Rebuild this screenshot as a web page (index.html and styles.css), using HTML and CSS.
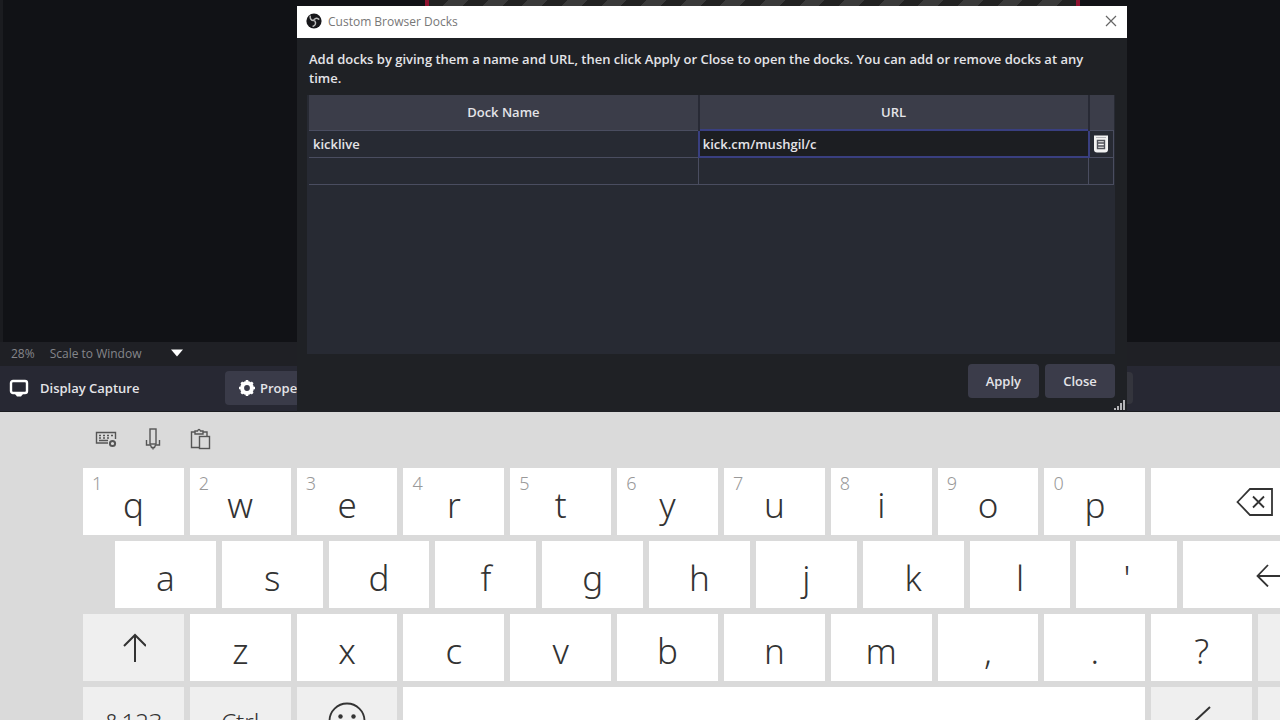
FILE: index.html
```
<!DOCTYPE html>
<html lang="en">
  <head>
    <meta charset="UTF-8" />
    <meta name="viewport" content="width=device-width, initial-scale=1.0" />
    <title>Custom Browser Docks</title>
    <link rel="stylesheet" href="styles.css">
  </head>
  <body>
    <main class="studio">
      <div class="preview">
        <div class="capture-edge"></div>
      </div>

      <div class="scale-bar">
        <span>28%</span>
        <button class="scale-btn">
          Scale to Window
          <svg width="12" height="8" viewBox="0 0 12 8"><path d="M0 0.500h12L6 7.500z" fill="#fff" /></svg>
        </button>
      </div>

      <div class="source-bar">
        <svg class="monitor" width="20" height="18" viewBox="0 0 20 18">
          <rect x="2" y="2" width="16" height="12" rx="2" fill="none" stroke="#fff" stroke-width="2.400" />
          <path d="M6 15h8l-2 2.500H8z" fill="#fff" />
        </svg>
        <span class="source-name">Display Capture</span>
        <button class="props-btn">
          <svg width="16" height="16" viewBox="0 0 16 16">
            <circle cx="8" cy="8" r="4.900" fill="none" stroke="#fff" stroke-width="4" />
            <path d="M8 0v3M8 13v3M0 8h3M13 8h3M2.300 2.300l2 2M11.700 11.700l2 2M2.300 13.700l2-2M11.700 4.300l2-2" stroke="#fff" stroke-width="2.600" />
          </svg>
          Properties
        </button>
        <div class="bar-end"></div>
      </div>

      <!-- Dialog -->
      <section class="dialog" role="dialog" aria-labelledby="dialogTitle">
        <header class="title-bar">
          <svg width="16" height="16" viewBox="0 0 16 16">
            <circle cx="8" cy="8" r="7.600" fill="#17171a" />
            <path d="M4.200 3.200c-.4 2.400 1 4.200 3.300 4.400M12.700 6.200c-2-1.500-4.300-1-5.200 1.400M7.200 13.200c2.300-.8 3-3 1.700-5.100" fill="none" stroke="#bbb" stroke-width="1.500" stroke-linecap="round" />
          </svg>
          <h1 id="dialogTitle">Custom Browser Docks</h1>
          <button class="close-x" aria-label="Close window">
            <svg width="12" height="12" viewBox="0 0 12 12"><path d="M1 1l10 10M11 1L1 11" stroke="#666" stroke-width="1.200" /></svg>
          </button>
        </header>

        <div class="dialog-body">
          <p class="hint">Add docks by giving them a name and URL, then click Apply or Close to open the docks. You can add or remove docks at any time.</p>

          <div class="dock-list">
            <table class="docks">
              <thead>
                <tr>
                  <th>Dock Name</th>
                  <th>URL</th>
                  <th class="action" aria-label="Delete"></th>
                </tr>
              </thead>
              <tbody>
                <tr>
                  <td><input type="text" aria-label="Dock name" value="kicklive" /></td>
                  <td class="editing"><input type="text" aria-label="URL" value="kick.cm/mushgil/c" /></td>
                  <td class="action">
                    <button class="trash" aria-label="Delete dock">
                      <svg width="16" height="20" viewBox="0 0 16 20">
                        <path d="M1 1.500h14v14q0 3-3 3H4q-3 0-3-3z" fill="#f2f2f2" />
                        <path d="M4.500 6.500h7v8h-7zM5 9h6M5 12h6" fill="none" stroke="#50525a" stroke-width="1.400" />
                        <path d="M3 3.500h10" stroke="#b5b5ba" />
                      </svg>
                    </button>
                  </td>
                </tr>
                <tr>
                  <td><input type="text" aria-label="New dock name" /></td>
                  <td><input type="text" aria-label="New dock URL" /></td>
                  <td class="action"></td>
                </tr>
              </tbody>
            </table>
          </div>

          <div class="actions">
            <button class="btn">Apply</button>
            <button class="btn">Close</button>
          </div>
        </div>
        <svg class="grip" width="12" height="12" viewBox="0 0 12 12"><path d="M2 9v2M5 7v4M8 4v7M11 1v10" stroke="#b4b4b8" stroke-width="2" /></svg>
      </section>
    </main>

    <!-- Touch keyboard -->
    <section class="keyboard" aria-label="Touch keyboard">
      <div class="tools">
        <button aria-label="Keyboard settings">
          <svg width="24" height="24" viewBox="0 0 24 24" fill="none" stroke="#555" stroke-width="1.400">
            <path d="M14 16H2.500V5.500h19V12" />
            <path d="M5 8.500h2M9 8.500h2M13 8.500h2M17 8.500h2M5 11h2M9 11h2M13 11h2M5 13.500h9" />
            <circle cx="18.500" cy="16.500" r="2.600" stroke-width="2" />
          </svg>
        </button>
        <button aria-label="Dictate">
          <svg width="24" height="24" viewBox="0 0 24 24" fill="none" stroke="#555" stroke-width="1.400">
            <rect x="9" y="2" width="6" height="15" />
            <path d="M5.500 13v5h4l1 2.500h3l1-2.500h4v-5M12 20v2.500" />
          </svg>
        </button>
        <button aria-label="Clipboard">
          <svg width="24" height="24" viewBox="0 0 24 24" fill="none" stroke="#555" stroke-width="1.400">
            <path d="M11 20.500H3.500V5H7M15 5h4v4" />
            <path d="M7 7V4h2.500q1.500-3 3 0H15v3z" />
            <rect x="11.500" y="9.500" width="10" height="12" />
          </svg>
        </button>
      </div>

      <div class="keys">
        <div class="key-row">
          <button class="key"><small>1</small>q</button>
          <button class="key"><small>2</small>w</button>
          <button class="key"><small>3</small>e</button>
          <button class="key"><small>4</small>r</button>
          <button class="key"><small>5</small>t</button>
          <button class="key"><small>6</small>y</button>
          <button class="key"><small>7</small>u</button>
          <button class="key"><small>8</small>i</button>
          <button class="key"><small>9</small>o</button>
          <button class="key"><small>0</small>p</button>
          <button class="key fill icon" aria-label="Backspace">
            <svg width="38" height="30" viewBox="0 0 38 30" fill="none" stroke="#333" stroke-width="1.800"><path d="M1.500 15L14 2h22v26H14zM17 9.500l11 11M28 9.500l-11 11" /></svg>
          </button>
        </div>
        <div class="key-row indent">
          <button class="key">a</button>
          <button class="key">s</button>
          <button class="key">d</button>
          <button class="key">f</button>
          <button class="key">g</button>
          <button class="key">h</button>
          <button class="key">j</button>
          <button class="key">k</button>
          <button class="key">l</button>
          <button class="key">'</button>
          <button class="key fill icon" aria-label="Enter">
            <svg width="30" height="24" viewBox="0 0 30 24" fill="none" stroke="#333" stroke-width="1.800"><path d="M29 4v9H2M12 2L1.500 13 12 23.500" /></svg>
          </button>
        </div>
        <div class="key-row">
          <button class="key dim icon" aria-label="Shift">
            <svg width="26" height="30" viewBox="0 0 26 30" fill="none" stroke="#333" stroke-width="2"><path d="M15 29V2M4 13L15 2l11 11" /></svg>
          </button>
          <button class="key">z</button>
          <button class="key">x</button>
          <button class="key">c</button>
          <button class="key">v</button>
          <button class="key">b</button>
          <button class="key">n</button>
          <button class="key">m</button>
          <button class="key">,</button>
          <button class="key">.</button>
          <button class="key">?</button>
          <button class="key dim" aria-label="Right shift"></button>
        </div>
        <div class="key-row">
          <button class="key dim word">&amp;123</button>
          <button class="key dim word">Ctrl</button>
          <button class="key dim icon" aria-label="Emoji">
            <svg width="38" height="38" viewBox="0 0 38 38" fill="none" stroke="#333" stroke-width="1.800"><circle cx="19" cy="19" r="17.500" /><path d="M10 24q9 9 18 0" /><g fill="#333" stroke="none"><circle cx="12.500" cy="14.500" r="2.200" /><circle cx="25.500" cy="14.500" r="2.200" /></g></svg>
          </button>
          <button class="key space" aria-label="Space"></button>
          <button class="key dim icon" aria-label="Left">
            <svg width="18" height="30" viewBox="0 0 18 30" fill="none" stroke="#333" stroke-width="2"><path d="M17 1L2 15l15 14" /></svg>
          </button>
          <button class="key dim" aria-label="Right"></button>
        </div>
      </div>
    </section>
  </body>
</html>
```
FILE: styles.css
```
* {
  box-sizing: border-box;
}

body {
  margin: 0;
  height: 100vh;
  overflow: hidden;
  background-color: #dadada;
  font-family: "Open Sans", sans-serif;
  font-size: 13px;
  font-weight: 600;
}

button,
input {
  font: inherit;
  color: inherit;
  border: none;
  padding: 0;
  background: none;
}

svg {
  display: block;
  flex: none;
}

/* OBS main window */
.studio {
  position: relative;
  background-color: #1f2025;
  color: #e4e4e8;
  overflow: hidden;
}

.preview {
  height: 342px;
  background-color: #111216;
  border-left: 3px solid #1b1c20;
}

/* Hatched bottom of the captured display */
.capture-edge {
  height: 6px;
  margin: 0 200px 0 422px;
  border: solid #8e1230;
  border-width: 0 4px;
  background: repeating-linear-gradient(135deg, #222 0 14px, #3a3a3a 14px 28px);
}

.scale-bar {
  display: flex;
  align-items: center;
  gap: 15px;
  height: 24px;
  padding: 0 0 2px 11px;
  font-size: 12px;
  font-weight: 400;
  color: #85868b;
}

.scale-btn {
  display: flex;
  align-items: center;
  gap: 30px;
}

.source-bar {
  display: flex;
  align-items: center;
  height: 46px;
  padding: 0 147px 2px 9px;
  background-color: #272833;
  border-bottom: 1px solid #1b1c20;
}

.source-name {
  flex: 0 0 185px;
  margin-left: 11px;
}

.props-btn {
  display: flex;
  align-items: center;
  gap: 5px;
  width: 110px;
  height: 34px;
  padding-left: 14px;
  border-radius: 4px;
  background-color: #3a3b49;
}

.bar-end {
  width: 20px;
  height: 32px;
  margin-left: auto;
  border-radius: 4px;
  background-color: #34353d;
}

/* Dialog */
.dialog {
  position: absolute;
  top: 6px;
  left: 297px;
  right: 153px;
  bottom: 0;
  display: flex;
  flex-direction: column;
  background-color: #1f2125;
}

.title-bar {
  display: flex;
  align-items: center;
  gap: 6px;
  height: 32px;
  padding: 0 10px 2px 9px;
  background-color: #fff;
}

.title-bar h1 {
  flex: 1;
  margin: 0;
  font-size: 12px;
  font-weight: 400;
  color: #777;
}

.dialog-body {
  flex: 1;
  display: flex;
  flex-direction: column;
  padding: 12px 12px 14px 10px;
}

.hint {
  margin: 0 0 7px 2px;
  line-height: 19px;
}

.dock-list {
  flex: 1;
  padding: 0 1px 0 2px;
  background-color: #272a33;
}

.docks {
  width: 100%;
  table-layout: fixed;
  border-collapse: collapse;
}

.docks th {
  height: 35px;
  padding: 0;
  font-weight: 600;
  background-color: #3b3d49;
  border-right: 2px solid #282a35;
}

.docks td {
  height: 27px;
  padding: 0;
  border: 1px solid #4a4d60;
}

.docks tr > :first-child {
  border-left: none;
}

.docks th:last-child {
  border-right: none;
}

.docks .action {
  width: 25px;
}

.docks input {
  display: block;
  width: 100%;
  height: 24px;
  padding: 0 4px;
  outline: none;
}

.docks .editing {
  border: 2px solid #393f80;
  background-color: #1c1e22;
}

.docks .editing input {
  padding: 0 3px;
}

.trash {
  display: block;
  margin: 0 auto;
}

.actions {
  display: flex;
  justify-content: flex-end;
  gap: 6px;
  margin-top: 10px;
}

.btn {
  min-width: 70px;
  height: 34px;
  padding: 0 18px;
  border-radius: 4px;
  background-color: #3b3c4a;
}

.grip {
  position: absolute;
  right: 2px;
  bottom: 1px;
}

/* Touch keyboard */
.keyboard {
  padding-left: 83px;
  overflow: hidden;
  color: #333;
}

.tools {
  display: flex;
  align-items: flex-start;
  gap: 23px;
  height: 56px;
  padding: 15px 0 0 11px;
}

/* The keyboard runs past the right side of the screen */
.keys {
  display: flex;
  flex-direction: column;
  gap: 6px;
  margin-right: -79px;
}

.key-row {
  display: flex;
  gap: 6px;
}

.key {
  --unit: calc((100% - 66px) / 12);
  position: relative;
  flex: 0 0 var(--unit);
  height: 67px;
  padding-top: 7px;
  background-color: #fff;
  font-family: "Noto Sans", sans-serif;
  font-size: 35px;
  font-weight: 350;
  line-height: 48px;
}

.key small {
  position: absolute;
  top: 3px;
  left: 9px;
  font-size: 18px;
  line-height: 24px;
  color: #999;
}

.indent .key:first-child {
  margin-left: 32px;
}

.fill {
  flex: 1;
}

.space {
  flex-basis: calc(var(--unit) * 7 + 36px);
}

.dim {
  background-color: #efefef;
}

.icon {
  display: flex;
  align-items: center;
  justify-content: center;
  padding: 0;
}

.word {
  padding-top: 2px;
  font-size: 24px;
}
```
